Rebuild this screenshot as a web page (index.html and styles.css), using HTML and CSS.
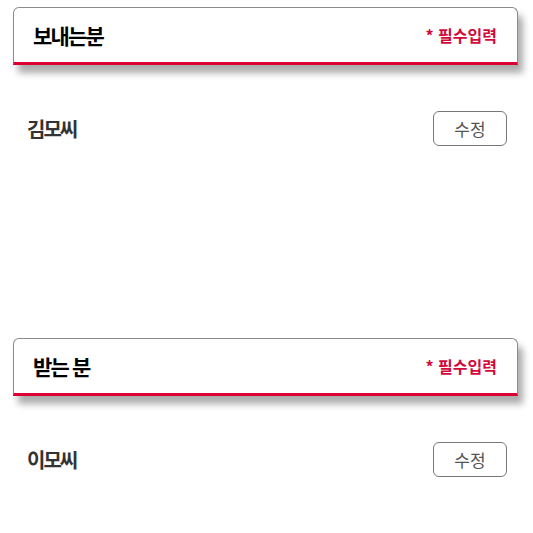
FILE: index.html
```html
<!DOCTYPE html>
<html lang="ko">
<head>
<meta charset="utf-8">
<link rel="stylesheet" href="styles.css">
</head>
<body>
<section class="section">
  <div class="head">
    <h2 class="title">보내는분</h2>
    <span class="req">* 필수입력</span>
  </div>
  <div class="row">
    <span class="name">김모씨</span>
    <button class="edit" type="button">수정</button>
  </div>
</section>
<section class="section">
  <div class="head">
    <h2 class="title">받는 분</h2>
    <span class="req">* 필수입력</span>
  </div>
  <div class="row">
    <span class="name">이모씨</span>
    <button class="edit" type="button">수정</button>
  </div>
</section>
</body>
</html>
```
FILE: styles.css
```css
html, body {
  margin: 0;
  padding: 0;
  background: #fff;
}
body {
  font-family: "Noto Sans CJK KR", "Noto Sans", sans-serif;
  padding-top: 7px;
}
.section + .section {
  margin-top: 192px;
}
.head {
  margin: 0 15px 0 13px;
  height: 54px;
  box-sizing: content-box;
  border: 1px solid #8a8a8a;
  border-bottom: 3px solid #dc0032;
  border-radius: 6px 6px 0 0;
  box-shadow: 5px 8px 7px rgba(0, 0, 0, 0.33);
  display: flex;
  align-items: center;
  justify-content: space-between;
  padding: 0 20px 0 19px;
  background: #fff;
}
.title {
  margin: 0;
  font-size: 21px;
  font-weight: 700;
  letter-spacing: -1.8px;
  color: #000;
  line-height: 1;
}
.req {
  font-size: 16px;
  font-weight: 700;
  color: #d20a3c;
  letter-spacing: 0;
  line-height: 1;
}
.row {
  display: flex;
  align-items: center;
  justify-content: space-between;
  margin: 46px 26px 0 27px;
}
.name {
  font-size: 20px;
  font-weight: 700;
  color: #333;
  letter-spacing: -2px;
}
.edit {
  width: 74px;
  height: 35px;
  border: 1px solid #777;
  border-radius: 6px;
  background: #fff;
  font-family: "Noto Sans CJK KR", "Noto Sans", sans-serif;
  font-size: 17px;
  color: #555;
  letter-spacing: 0;
  padding: 0;
}
```
